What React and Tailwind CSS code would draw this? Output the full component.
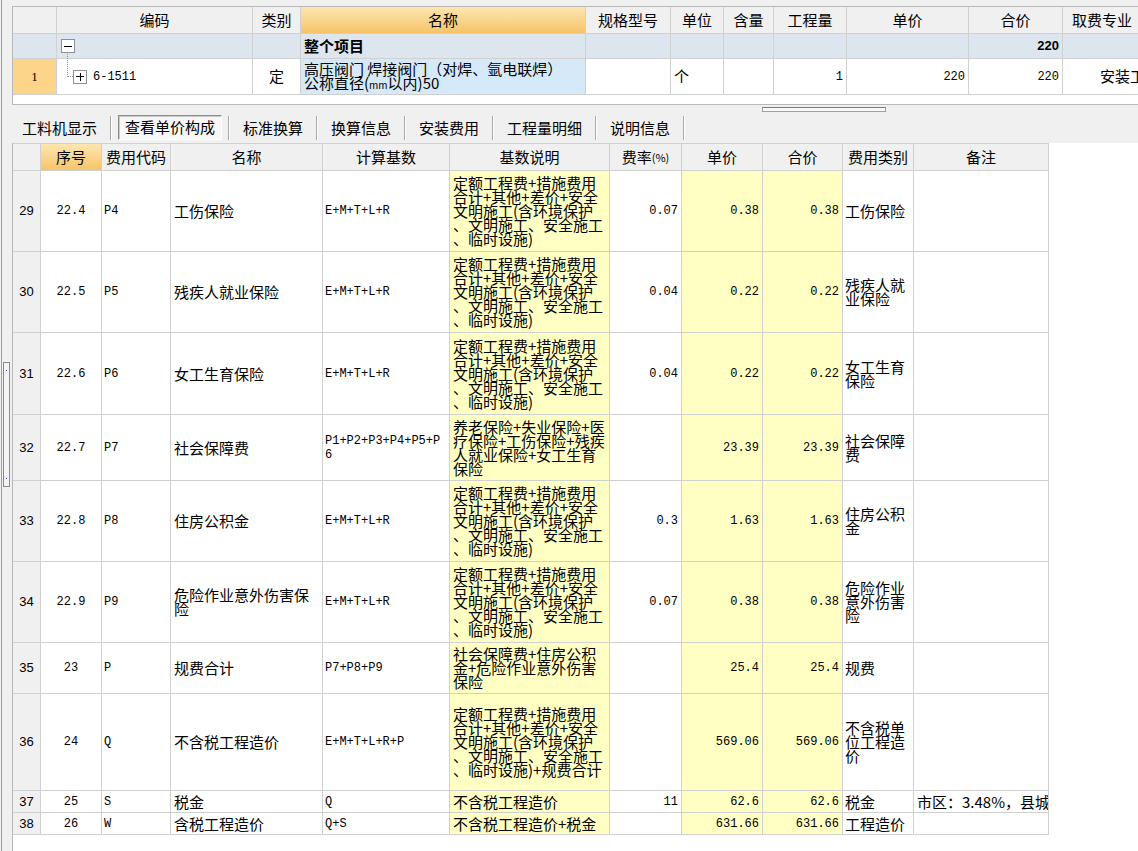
import React from 'react';

const CJK = "font-['Noto_Sans_CJK_SC',sans-serif]";
const MONO = "font-['Liberation_Mono','Noto_Sans_CJK_SC',monospace]";

const J5 = '定额工程费+措施费用\n合计+其他+差价+安全\n文明施工(含环境保护\n、文明施工、安全施工\n、临时设施)';

const rows = [
  { n: 29, seq: '22.4', code: 'P4', name: '工伤保险', base: 'E+M+T+L+R', desc: J5, rate: '0.07', price: '0.38', total: '0.38', cat: '工伤保险', h: 'h-[81px]' },
  { n: 30, seq: '22.5', code: 'P5', name: '残疾人就业保险', base: 'E+M+T+L+R', desc: J5, rate: '0.04', price: '0.22', total: '0.22', cat: '残疾人就\n业保险', h: 'h-[81px]' },
  { n: 31, seq: '22.6', code: 'P6', name: '女工生育保险', base: 'E+M+T+L+R', desc: J5, rate: '0.04', price: '0.22', total: '0.22', cat: '女工生育\n保险', h: 'h-[82px]' },
  { n: 32, seq: '22.7', code: 'P7', name: '社会保障费', base: 'P1+P2+P3+P4+P5+P\n6', desc: '养老保险+失业保险+医\n疗保险+工伤保险+残疾\n人就业保险+女工生育\n保险', rate: '', price: '23.39', total: '23.39', cat: '社会保障\n费', h: 'h-[66px]' },
  { n: 33, seq: '22.8', code: 'P8', name: '住房公积金', base: 'E+M+T+L+R', desc: J5, rate: '0.3', price: '1.63', total: '1.63', cat: '住房公积\n金', h: 'h-[81px]' },
  { n: 34, seq: '22.9', code: 'P9', name: '危险作业意外伤害保\n险', base: 'E+M+T+L+R', desc: J5, rate: '0.07', price: '0.38', total: '0.38', cat: '危险作业\n意外伤害\n险', h: 'h-[81px]' },
  { n: 35, seq: '23', code: 'P', name: '规费合计', base: 'P7+P8+P9', desc: '社会保障费+住房公积\n金+危险作业意外伤害\n保险', rate: '', price: '25.4', total: '25.4', cat: '规费', h: 'h-[51px]' },
  { n: 36, seq: '24', code: 'Q', name: '不含税工程造价', base: 'E+M+T+L+R+P', desc: '定额工程费+措施费用\n合计+其他+差价+安全\n文明施工(含环境保护\n、文明施工、安全施工\n、临时设施)+规费合计', rate: '', price: '569.06', total: '569.06', cat: '不含税单\n位工程造\n价', h: 'h-[97px]' },
  { n: 37, seq: '25', code: 'S', name: '税金', base: 'Q', desc: '不含税工程造价', rate: '11', price: '62.6', total: '62.6', cat: '税金', note: '市区：3.48%，县城', h: 'h-[22px]' },
  { n: 38, seq: '26', code: 'W', name: '含税工程造价', base: 'Q+S', desc: '不含税工程造价+税金', rate: '', price: '631.66', total: '631.66', cat: '工程造价', h: 'h-[22px]' },
];

const cell = 'shrink-0 h-full border-r border-[#d0d0d0] flex items-center overflow-hidden';

function Tab({ label, active, first }) {
  if (active) {
    return (
      <div className="ml-[6px] mr-[6px] w-[104px] h-[25px] border border-[#8c8c8c] border-b-white border-r-white bg-[#f7f7f7] flex items-center justify-center shadow-[inset_1px_1px_0_#c8c8c8]">
        {label}
      </div>
    );
  }
  return <div className={first ? 'pr-[13px] leading-[24px]' : 'px-[13px] leading-[24px]'}>{label}</div>;
}

const Sep = () => <div className="w-[2px] h-[24px] border-l border-[#a8a8a8] border-r border-r-white" />;

export default function App() {
  return (
    <div className={`w-[1138px] h-[851px] bg-[#f0f0f0] flex overflow-hidden text-black ${CJK}`}>
      {/* left splitter strip */}
      <div className="w-[12px] shrink-0 h-full flex">
        <div className="w-[2px] h-full border-r border-[#a0a0a0]" />
        <div className="flex flex-col">
          <div className="h-[362px]" />
          <div className="ml-[1px] w-[7px] h-[125px] border border-[#8c8c8c] bg-[#f4f4f4] flex flex-col justify-between items-center py-[7px]">
            <div className="w-px h-px bg-[#3050c0]" />
            <div className="w-px h-px bg-[#3050c0]" />
          </div>
        </div>
      </div>

      <div className="flex-1 flex flex-col min-w-0">
        <div className="h-[6px] shrink-0" />

        {/* top panel */}
        <div className="h-[99px] shrink-0 bg-white border-t border-l border-b border-[#b8b8b8] overflow-hidden">
          <div className="w-[1160px] text-[15px]">
            <div className="flex h-[27px] border-b border-[#d0d0d0] bg-[#f0f0f0]">
              <div className={`${cell} w-[44px]`} />
              <div className={`${cell} w-[196px] justify-center`}>编码</div>
              <div className={`${cell} w-[48px] justify-center`}>类别</div>
              <div className={`${cell} w-[285px] justify-center bg-gradient-to-b from-[#fde6b0] to-[#f6c467]`}>名称</div>
              <div className={`${cell} w-[85px] justify-center`}>规格型号</div>
              <div className={`${cell} w-[53px] justify-center`}>单位</div>
              <div className={`${cell} w-[50px] justify-center`}>含量</div>
              <div className={`${cell} w-[73px] justify-center`}>工程量</div>
              <div className={`${cell} w-[122px] justify-center`}>单价</div>
              <div className={`${cell} w-[94px] justify-center`}>合价</div>
              <div className={`${cell} w-[100px] pl-[9px]`}>取费专业</div>
            </div>
            <div className="flex h-[25px] border-b border-[#d0d0d0] bg-[#dde6ef]">
              <div className={`${cell} w-[44px]`} />
              <div className={`${cell} w-[196px] pl-[4px]`}>
                <div className="w-[14px] h-[14px] border border-[#909090] bg-white flex items-center justify-center">
                  <div className="w-[8px] h-px bg-black" />
                </div>
              </div>
              <div className={`${cell} w-[48px]`} />
              <div className={`${cell} w-[285px] pl-[3px] font-bold`}>整个项目</div>
              <div className={`${cell} w-[85px]`} />
              <div className={`${cell} w-[53px]`} />
              <div className={`${cell} w-[50px]`} />
              <div className={`${cell} w-[73px]`} />
              <div className={`${cell} w-[122px]`} />
              <div className={`${cell} w-[94px] justify-end pr-[3px] font-bold text-[13px] font-['Liberation_Sans',sans-serif]`}>220</div>
              <div className={`${cell} w-[100px]`} />
            </div>
            <div className="flex h-[36px] border-b border-[#d0d0d0]">
              <div className={`${cell} w-[44px] justify-center bg-[#fcd58b] text-[13px] font-['Liberation_Serif',serif]`}>1</div>
              <div className={`${cell} w-[196px] pl-[16px] relative overflow-visible`}>
                <div className="absolute left-[10px] top-[-5px] w-[6px] h-[23px] border-l border-b border-dotted border-[#909090]" />
                <div className="w-[14px] h-[14px] border border-[#909090] bg-white flex items-center justify-center relative">
                  <div className="w-[8px] h-px bg-black" />
                  <div className="absolute w-px h-[8px] bg-black" />
                </div>
                <span className={`ml-[6px] text-[12px] ${MONO}`}>6-1511</span>
              </div>
              <div className={`${cell} w-[48px] justify-center`}>定</div>
              <div className={`${cell} w-[285px] pl-[3px] bg-[#d6e9f8]`}>
                <div className="leading-[14px]">
                  <div className="whitespace-nowrap">高压阀门 焊接阀门（对焊、氩电联焊）</div>
                  <div className="whitespace-nowrap">公称直径(<span className="text-[10px]">mm</span>以内)50</div>
                </div>
              </div>
              <div className={`${cell} w-[85px]`} />
              <div className={`${cell} w-[53px] pl-[3px]`}>个</div>
              <div className={`${cell} w-[50px]`} />
              <div className={`${cell} w-[73px] justify-end pr-[3px] text-[12px] ${MONO}`}>1</div>
              <div className={`${cell} w-[122px] justify-end pr-[3px] text-[12px] ${MONO}`}>220</div>
              <div className={`${cell} w-[94px] justify-end pr-[3px] text-[12px] ${MONO}`}>220</div>
              <div className={`${cell} w-[100px] pl-[37px] whitespace-nowrap`}>安装工程</div>
            </div>
          </div>
        </div>

        {/* splitter + tabs */}
        <div className="h-[38px] shrink-0 flex flex-col">
          <div className="h-[10px] flex items-start">
            <div className="ml-[750px] mt-[2px] w-[124px] h-[5px] border border-[#a0a0a0] border-t-[#7a7a7a] bg-[#f8f8f8]" />
          </div>
          <div className="flex items-center text-[15px] pl-[10px] h-[25px]">
            <Tab label="工料机显示" first />
            <Sep />
            <Tab label="查看单价构成" active />
            <Sep />
            <Tab label="标准换算" />
            <Sep />
            <Tab label="换算信息" />
            <Sep />
            <Tab label="安装费用" />
            <Sep />
            <Tab label="工程量明细" />
            <Sep />
            <Tab label="说明信息" />
            <Sep />
          </div>
        </div>

        {/* lower panel */}
        <div className="flex-1 bg-white border-l border-[#b8b8b8] overflow-hidden">
          <div className="w-[1036px] border-t border-[#d0d0d0] text-[15px]">
            <div className="flex h-[27px] border-b border-[#d0d0d0] bg-[#f0f0f0]">
              <div className={`${cell} w-[28px]`} />
              <div className={`${cell} w-[61px] justify-center bg-gradient-to-b from-[#fde6b0] to-[#f6c467]`}>序号</div>
              <div className={`${cell} w-[69px] justify-center`}>费用代码</div>
              <div className={`${cell} w-[152px] justify-center`}>名称</div>
              <div className={`${cell} w-[127px] justify-center`}>计算基数</div>
              <div className={`${cell} w-[160px] justify-center`}>基数说明</div>
              <div className={`${cell} w-[72px] justify-center`}>费率<span className="text-[11px]">(%)</span></div>
              <div className={`${cell} w-[81px] justify-center`}>单价</div>
              <div className={`${cell} w-[80px] justify-center`}>合价</div>
              <div className={`${cell} w-[71px] justify-center`}>费用类别</div>
              <div className={`${cell} w-[135px] justify-center`}>备注</div>
            </div>
            {rows.map((r) => (
              <div key={r.n} className={`flex ${r.h} border-b border-[#d0d0d0] leading-[14px]`}>
                <div className={`${cell} w-[28px] justify-center bg-[#f0f0f0] text-[13px] font-['Liberation_Sans',sans-serif]`}>{r.n}</div>
                <div className={`${cell} w-[61px] justify-center text-[12px] ${MONO}`}>{r.seq}</div>
                <div className={`${cell} w-[69px] pl-[2px] text-[12px] ${MONO}`}>{r.code}</div>
                <div className={`${cell} w-[152px] pl-[3px] whitespace-pre`}>{r.name}</div>
                <div className={`${cell} w-[127px] pl-[2px] text-[12px] whitespace-pre ${MONO}`}>{r.base}</div>
                <div className={`${cell} w-[160px] pl-[3px] bg-[#ffffc4] whitespace-pre`}>{r.desc}</div>
                <div className={`${cell} w-[72px] justify-end pr-[3px] text-[12px] ${MONO}`}>{r.rate}</div>
                <div className={`${cell} w-[81px] justify-end pr-[3px] bg-[#ffffc4] text-[12px] ${MONO}`}>{r.price}</div>
                <div className={`${cell} w-[80px] justify-end pr-[3px] bg-[#ffffc4] text-[12px] ${MONO}`}>{r.total}</div>
                <div className={`${cell} w-[71px] pl-[2px] whitespace-pre`}>{r.cat}</div>
                <div className={`${cell} w-[135px] pl-[3px] whitespace-pre`}>{r.note || ''}</div>
              </div>
            ))}
          </div>
        </div>
      </div>
    </div>
  );
}
